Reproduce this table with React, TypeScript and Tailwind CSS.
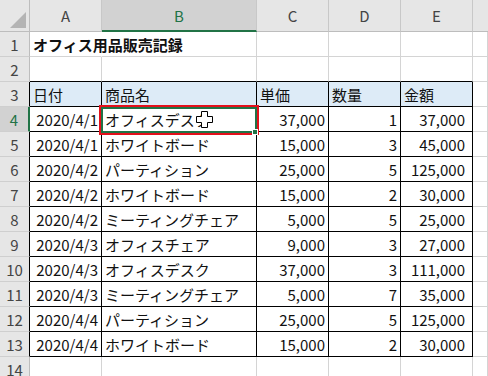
import React from "react";

const COLS = ["A", "B", "C", "D", "E"];
const WIDTHS = [30, 72, 155, 72, 72, 72];

type Row = [string, string, string, string, string];

const data: Row[] = [
  ["2020/4/1", "オフィスデスク", "37,000", "1", "37,000"],
  ["2020/4/1", "ホワイトボード", "15,000", "3", "45,000"],
  ["2020/4/2", "パーティション", "25,000", "5", "125,000"],
  ["2020/4/2", "ホワイトボード", "15,000", "2", "30,000"],
  ["2020/4/2", "ミーティングチェア", "5,000", "5", "25,000"],
  ["2020/4/3", "オフィスチェア", "9,000", "3", "27,000"],
  ["2020/4/3", "オフィスデスク", "37,000", "3", "111,000"],
  ["2020/4/3", "ミーティングチェア", "5,000", "7", "35,000"],
  ["2020/4/4", "パーティション", "25,000", "5", "125,000"],
  ["2020/4/4", "ホワイトボード", "15,000", "2", "30,000"],
];

const headings = ["日付", "商品名", "単価", "数量", "金額"];

const cellText = (r: number, c: number): string => {
  if (r === 1 && c === 0) return "オフィス用品販売記録";
  if (r === 3) return headings[c] ?? "";
  if (r >= 4 && r <= 13) return data[r - 4][c] ?? "";
  return "";
};

const inTable = (r: number, c: number) => r >= 3 && r <= 13 && c <= 4;

const Cell = ({ r, c }: { r: number; c: number }) => {
  const text = cellText(r, c);
  const table = inTable(r, c);
  const right = r >= 4 && (c === 0 || c === 2 || c === 3 || c === 4);
  const rightBorder =
    r === 1 && c === 0
      ? "border-r-transparent"
      : table
        ? "border-r-black"
        : "border-r-[#d4d4d4]";
  const bottomBorder =
    table || (r === 2 && c <= 4) ? "border-b-black" : "border-b-[#d4d4d4]";
  const bg = r === 3 && c <= 4 ? "bg-[#ddebf7]" : "";
  const pad = c === 4 && r >= 4 ? "pr-[7px]" : right ? "pr-[3px]" : "pl-[3px]";

  return (
    <div
      className={[
        "relative flex h-[25px] items-center overflow-visible whitespace-nowrap border-r border-b text-[15px] leading-none text-[#111]",
        rightBorder,
        bottomBorder,
        bg,
        right ? "justify-end" : "justify-start",
        pad,
        r === 1 ? "font-bold" : "",
      ].join(" ")}
    >
      <span className="relative z-10 pt-[1px]">{text}</span>
    </div>
  );
};

const RowHeader = ({ r }: { r: number }) => {
  const active = r === 4;
  return (
    <div
      className={[
        "flex h-[25px] items-center justify-center border-r border-b border-b-[#cfcfcf] text-[15px] leading-none",
        active
          ? "border-r-2 border-r-[#217346] bg-[#d2d2d2] text-[#217346]"
          : r >= 3 && r <= 13
            ? "border-r-black bg-[#e6e6e6] text-[#444]"
            : "border-r-[#bdbdbd] bg-[#e6e6e6] text-[#444]",
      ].join(" ")}
    >
      {r}
    </div>
  );
};

const Cursor = () => (
  <svg width="17" height="17" viewBox="0 0 17 17" className="absolute left-[196px] top-[111px] z-30">
    <path
      d="M5.5 0.5 H11.5 V5.5 H16.5 V11.5 H11.5 V16.5 H5.5 V11.5 H0.5 V5.5 H5.5 Z"
      fill="#fff"
      stroke="#000"
      strokeWidth="1"
    />
  </svg>
);

export default function App() {
  const rows = Array.from({ length: 14 }, (_, i) => i + 1);
  return (
    <div
      className="relative h-[376px] w-[488px] overflow-hidden bg-white"
      style={{ fontFamily: "'Noto Sans CJK JP', 'Noto Sans', sans-serif" }}
    >
      <div className="grid grid-cols-[30px_72px_155px_72px_72px_72px_1fr]">
        {/* column header row */}
        <div className="relative h-[32px] border-r border-b border-r-[#bdbdbd] border-b-[#bdbdbd] bg-[#e6e6e6]">
          <svg width="16" height="16" viewBox="0 0 16 16" className="absolute right-[3px] bottom-[3px]">
            <polygon points="16,0 16,16 0,16" fill="#b4b4b4" />
          </svg>
        </div>
        {COLS.map((col, i) => (
          <div
            key={col}
            className={[
              "flex h-[32px] items-center justify-center border-r border-r-[#c8c8c8] text-[15px] leading-none",
              col === "B"
                ? "border-b-2 border-b-[#217346] bg-[#d2d2d2] text-[#217346]"
                : "border-b border-b-[#bdbdbd] bg-[#e6e6e6] text-[#444]",
            ].join(" ")}
            style={{ width: WIDTHS[i + 1] }}
          >
            {col}
          </div>
        ))}
        <div className="h-[32px] border-b border-b-[#bdbdbd] bg-[#e6e6e6]" />

        {rows.map((r) => (
          <React.Fragment key={r}>
            <RowHeader r={r} />
            {[0, 1, 2, 3, 4, 5].map((c) => (
              <Cell key={c} r={r} c={c} />
            ))}
          </React.Fragment>
        ))}
      </div>

      {/* selection: red annotation box, green active cell */}
      <div className="pointer-events-none absolute left-[99px] top-[105px] z-20 h-[30px] w-[160px] border-2 border-[#e3101b]" />
      <div className="pointer-events-none absolute left-[101px] top-[107px] z-20 h-[26px] w-[156px] border-2 border-[#217346]" />
      <div className="absolute left-[252px] top-[129px] z-20 h-[6px] w-[6px] border border-white bg-[#217346]" />
      <Cursor />
    </div>
  );
}
